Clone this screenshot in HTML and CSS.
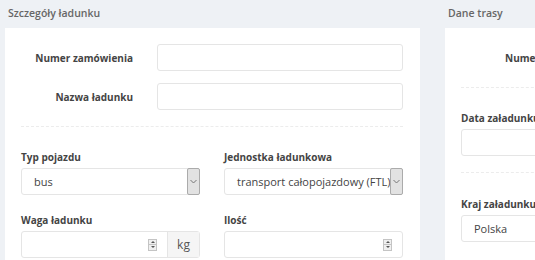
FILE: index.html
```html
<!DOCTYPE html>
<html lang="pl">
<head>
  <meta charset="UTF-8" />
  <title>Nowe zlecenie</title>
  <link rel="stylesheet" href="styles.css">
</head>
<body>

  <div class="columns">
    <section class="section section-cargo">
      <h2 class="section-title">Szczegóły ładunku</h2>
      <div class="panel">
        <div class="row-h">
          <label class="label-h">Numer zamówienia</label>
          <input class="input" type="text">
        </div>
        <div class="row-h">
          <label class="label-h">Nazwa ładunku</label>
          <input class="input" type="text">
        </div>

        <hr class="divider">

        <div class="grid-2">
          <div class="field">
            <label class="label">Typ pojazdu</label>
            <div class="select">
              <span class="select-value">bus</span>
              <span class="select-arrow"><svg width="7" height="5" viewBox="0 0 7 5"><path d="M0.5 1 L3.5 4 L6.5 1" fill="none" stroke="#777" stroke-width="1"/></svg></span>
            </div>
          </div>
          <div class="field">
            <label class="label">Jednostka ładunkowa</label>
            <div class="select">
              <span class="select-value">transport całopojazdowy (FTL)</span>
              <span class="select-arrow"><svg width="7" height="5" viewBox="0 0 7 5"><path d="M0.5 1 L3.5 4 L6.5 1" fill="none" stroke="#777" stroke-width="1"/></svg></span>
            </div>
          </div>
          <div class="field">
            <label class="label">Waga ładunku</label>
            <div class="input-group">
              <div class="number">
                <span class="spin"><span class="spin-up"></span><span class="spin-down"></span></span>
              </div>
              <span class="addon">kg</span>
            </div>
          </div>
          <div class="field">
            <label class="label">Ilość</label>
            <div class="number number-alone">
              <span class="spin"><span class="spin-up"></span><span class="spin-down"></span></span>
            </div>
          </div>
        </div>
      </div>
    </section>

    <section class="section section-route">
      <h2 class="section-title">Dane trasy</h2>
      <div class="panel">
        <div class="row-h">
          <label class="label-h">Numer referencyjny</label>
          <input class="input" type="text">
        </div>

        <hr class="divider">

        <div class="field">
          <label class="label">Data załadunku</label>
          <input class="input" type="text">
        </div>

        <hr class="divider">

        <div class="field">
          <label class="label">Kraj załadunku</label>
          <div class="select">
            <span class="select-value">Polska</span>
            <span class="select-arrow"><svg width="7" height="5" viewBox="0 0 7 5"><path d="M0.5 1 L3.5 4 L6.5 1" fill="none" stroke="#777" stroke-width="1"/></svg></span>
          </div>
        </div>
      </div>
    </section>
  </div>

</body>
</html>
```

FILE: styles.css
```css
html, body {
  margin: 0;
  height: 100%;
  overflow: hidden;
}
body {
  background: #eef1f5;
  font-family: "Open Sans", Arial, sans-serif;
  font-size: 11px;
  color: #333;
}
.columns {
  display: flex;
  gap: 25px;
  padding-left: 5px;
  width: 900px;
}
.section-cargo {
  width: 415px;
  flex: none;
}
.section-route {
  width: 420px;
  flex: none;
}
.section-title {
  margin: 0;
  padding: 5px 3px 0;
  height: 23px;
  line-height: 16px;
  font-size: 10.5px;
  font-weight: 600;
  color: #666;
}
.panel {
  background: #fff;
  padding: 16px 17px 16px 16px;
  min-height: 260px;
}
.row-h {
  display: flex;
  align-items: center;
  gap: 24px;
}
.row-h + .row-h {
  margin-top: 12px;
}
.label-h {
  width: 112px;
  flex: none;
  text-align: right;
  font-size: 10px;
  font-weight: 700;
  color: #444;
}
.label {
  display: block;
  font-size: 10px;
  line-height: 16px;
  font-weight: 700;
  color: #444;
  margin-bottom: 3px;
}
.input {
  flex: 1;
  min-width: 0;
  box-sizing: border-box;
  height: 27px;
  border: 1px solid #e5e5e5;
  border-radius: 3px;
  padding: 0 12px;
  font: inherit;
  outline: none;
}
.field .input {
  width: 100%;
}
.divider {
  border: none;
  border-top: 1px dashed #ececec;
  margin: 16px 0 22px;
}
.grid-2 {
  display: grid;
  grid-template-columns: minmax(0, 1fr) minmax(0, 1fr);
  column-gap: 24px;
  row-gap: 17px;
}
.select {
  display: flex;
  height: 27px;
  box-sizing: border-box;
  border: 1px solid #e5e5e5;
  border-radius: 3px;
}
.select-value {
  flex: 1;
  min-width: 0;
  white-space: nowrap;
  overflow: hidden;
  padding-left: 12px;
  line-height: 25px;
  color: #444;
}
.select-arrow {
  flex: none;
  width: 13px;
  box-sizing: border-box;
  margin: -1px -1px -1px 0;
  background: #e2e2e2;
  border: 1px solid #ababab;
  border-radius: 2px;
  display: flex;
  align-items: center;
  justify-content: center;
}
.input-group {
  display: flex;
  height: 27px;
  box-sizing: border-box;
  border: 1px solid #e5e5e5;
  border-radius: 3px;
}
.number {
  flex: 1;
  display: flex;
  align-items: center;
  justify-content: flex-end;
  padding-right: 10px;
}
.number-alone {
  height: 27px;
  box-sizing: border-box;
  border: 1px solid #e5e5e5;
  border-radius: 3px;
}
.spin {
  display: flex;
  flex-direction: column;
  width: 9px;
  height: 12px;
  border: 1px solid #c4c4c4;
  box-sizing: border-box;
  background: #f0f0f0;
}
.spin-up, .spin-down {
  flex: 1;
  position: relative;
}
.spin-up {
  border-bottom: 1px solid #c4c4c4;
}
.spin-up::after, .spin-down::after {
  content: "";
  position: absolute;
  left: 1.5px;
  border-left: 2px solid transparent;
  border-right: 2px solid transparent;
}
.spin-up::after {
  top: 1px;
  border-bottom: 2px solid #555;
}
.spin-down::after {
  top: 1px;
  border-top: 2px solid #555;
}
.addon {
  width: 31px;
  background: #f5f5f5;
  border-left: 1px solid #e5e5e5;
  color: #555;
  display: flex;
  align-items: center;
  justify-content: center;
  font-size: 12px;
}
.section-route .label-h {
  width: 112px;
  margin-left: 44px;
  text-align: left;
}
.section-route .divider + .field + .divider {
  margin-bottom: 23px;
}
```
